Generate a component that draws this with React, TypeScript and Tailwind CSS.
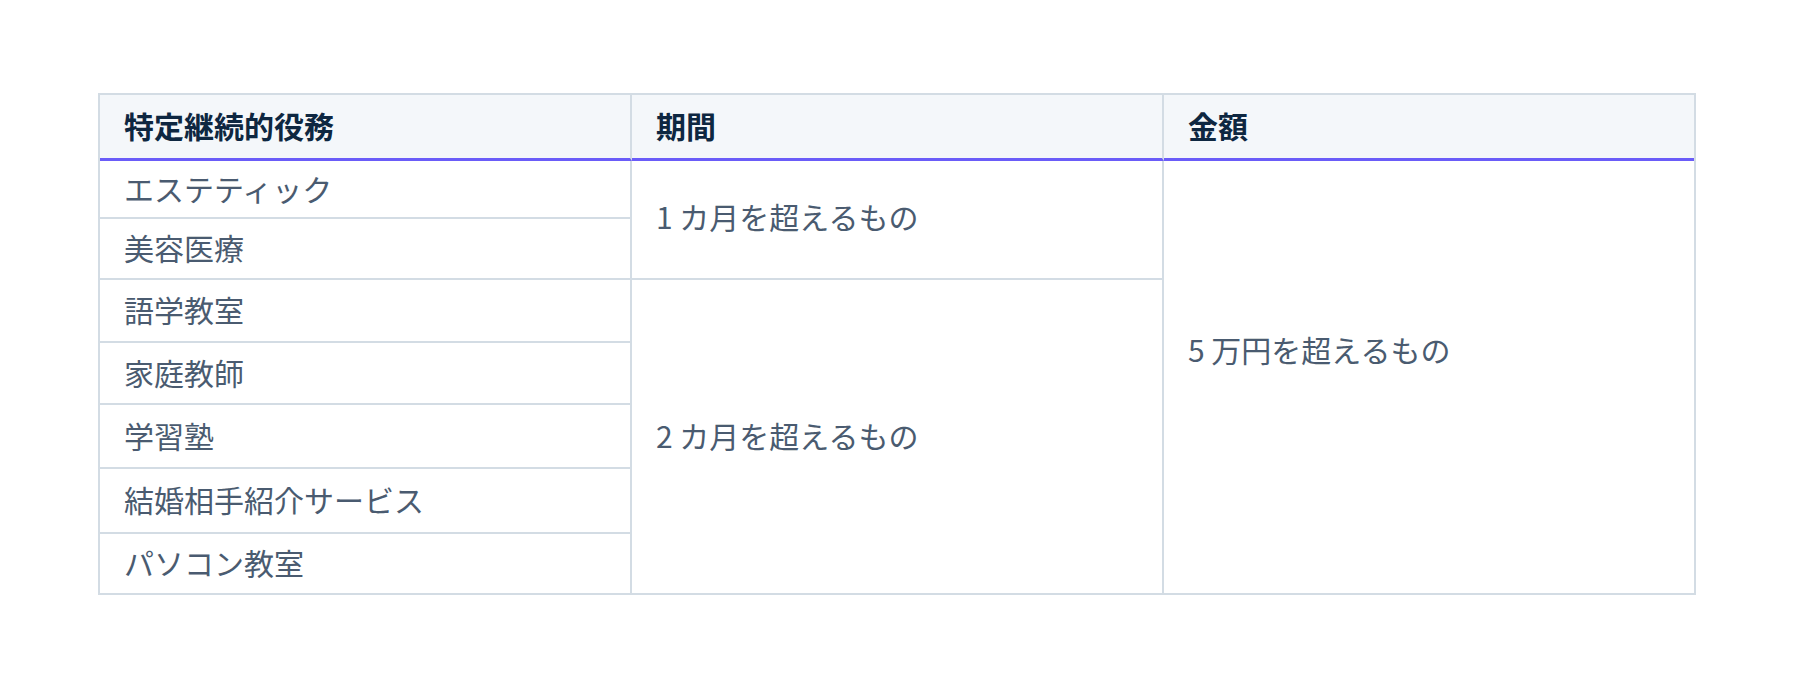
import React from 'react';

const services = [
  'エステティック',
  '美容医療',
  '語学教室',
  '家庭教師',
  '学習塾',
  '結婚相手紹介サービス',
  'パソコン教室',
];

const headers = ['特定継続的役務', '期間', '金額'];

export default function App() {
  return (
    <div
      className="min-h-[698px] w-full bg-white pt-[93px] pl-[98px]"
      style={{ fontFamily: '"Noto Sans CJK JP", "Noto Sans", sans-serif' }}
    >
      <div className="w-[1598px] border-2 border-[#d3dce4]">
        <div className="grid grid-cols-[532px_532px_1fr] grid-rows-[66px_58px_61px_63px_62px_64px_65px_59px] text-[30px]">
          {headers.map((h, i) => (
            <div
              key={h}
              className={
                'flex items-center bg-[#f4f7fa] pl-6 pb-[3px] font-bold text-[#0e2741] border-b-[3px] border-b-[#6a5cf8] ' +
                (i < 2 ? 'border-r-2 border-r-[#d3dce4]' : '')
              }
            >
              {h}
            </div>
          ))}

          {/* service names, one per row */}
          {services.map((s, i) => (
            <div
              key={s}
              className={
                'col-start-1 flex items-center pl-6 pb-[2px] text-[#4a5b70] border-r-2 border-[#d3dce4] ' +
                (i < services.length - 1 ? 'border-b-2' : '')
              }
              style={{ gridRowStart: i + 2 }}
            >
              {s}
            </div>
          ))}

          <div className="col-start-2 row-start-2 row-span-2 flex items-center border-r-2 border-b-2 border-[#d3dce4] pb-[6px] pl-6 text-[#4a5b70]">
            1 カ月を超えるもの
          </div>
          <div className="col-start-2 row-start-4 row-span-5 flex items-center border-r-2 border-[#d3dce4] pb-[3px] pl-6 text-[#4a5b70]">
            2 カ月を超えるもの
          </div>
          <div className="col-start-3 row-start-2 row-span-7 flex items-center pb-[56px] pl-6 text-[#4a5b70]">
            5 万円を超えるもの
          </div>
        </div>
      </div>
    </div>
  );
}
